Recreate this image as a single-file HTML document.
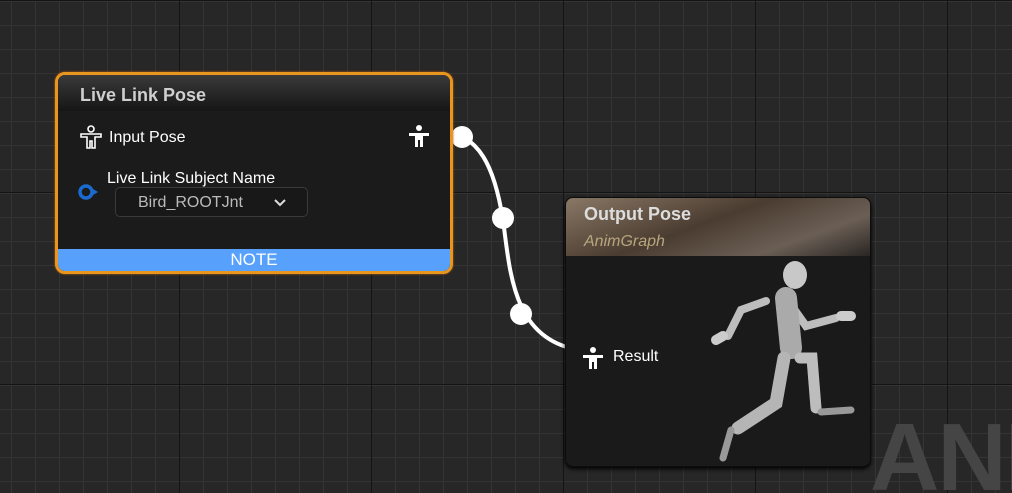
<!DOCTYPE html>
<html style="width:1012px;height:493px;overflow:hidden"><head><style>
body{margin:0;width:1012px;height:493px;overflow:hidden;font-family:"Liberation Sans",sans-serif;
background-color:#272727;
background-image:
linear-gradient(90deg,#141414 1px,transparent 1px),
linear-gradient(0deg,#141414 1px,transparent 1px),
linear-gradient(90deg,#343434 1px,transparent 1px),
linear-gradient(0deg,#343434 1px,transparent 1px);
background-size:192px 192px,192px 192px,24px 24px,24px 24px;
background-position:179px 0,0 193px,11px 0,0 2px;position:relative}
.n1{position:absolute;left:55px;top:72px;width:392px;height:196px;border:3px solid #e8961e;border-radius:10px;background:#1b1b1b;overflow:hidden;box-shadow:0 0 2px #c06010}
.h1{height:36px;background:linear-gradient(#3a3a3a,#161616);color:#cfcfcf;font-weight:bold;font-size:18px;line-height:40px;padding-left:22px}
.t{position:absolute;color:#fff;font-size:16px}
.note{position:absolute;left:0;right:0;bottom:0;height:22px;background:#57a0fb;color:#fff;text-align:center;font-size:17px;line-height:22px}
.dd{position:absolute;left:57px;top:112px;width:193px;height:30px;border:1px solid #3a3a3a;border-radius:5px;background:#181818;color:#bbb;font-size:16px;line-height:30px;padding-left:22px;box-sizing:border-box}
.n2{position:absolute;left:565px;top:197px;width:304px;height:268px;border-radius:8px;background:#1a1a1a;border:1px solid #0c0c0c;overflow:hidden;box-shadow:0 2px 4px #000}
.h2{height:58px;background:linear-gradient(160deg,#8a7866 0%,#4a3c30 45%,#6b5f55 75%,#2a2624 100%)}
</style></head><body>
<div style="position:absolute;left:870px;top:410px;width:142px;height:83px;overflow:hidden"><div style="font-size:96px;line-height:96px;font-weight:bold;color:#454545;letter-spacing:-2px;white-space:nowrap">ANIM</div></div>
<svg style="position:absolute;left:0;top:0" width="1012" height="493">
<path d="M437 132 C480 130 495 170 503 220 C510 270 512 340 580 350" stroke="#fff" stroke-width="4" fill="none"/>
<circle cx="462" cy="137" r="11" fill="#fff"/><circle cx="503" cy="218" r="11" fill="#fff"/><circle cx="521" cy="314" r="11" fill="#fff"/>
</svg>
<div class="n1"><div class="h1">Live Link Pose</div>
<svg style="position:absolute;left:22px;top:50px" width="22" height="24" fill="none" stroke="#fff" stroke-width="1.6"><circle cx="11" cy="4" r="3"/><path d="M1 9h20v3h-6v11h-3v-7h-2v7H7V12H1z"/></svg>
<div class="t" style="left:51px;top:54px">Input Pose</div>
<svg style="position:absolute;left:350px;top:49px" width="22" height="24" fill="#fff"><circle cx="11" cy="4" r="3"/><path d="M1 9h20v3h-6v11h-3v-7h-2v7H7V12H1z"/></svg>
<div class="t" style="left:49px;top:95px">Live Link Subject Name</div>
<svg style="position:absolute;left:20px;top:109px" width="24" height="16"><circle cx="8" cy="8" r="6" stroke="#1a6ad0" stroke-width="3.5" fill="none"/><path d="M15 5l5 3-5 3z" fill="#1a6ad0"/></svg>
<div class="dd">Bird_ROOTJnt<svg style="position:absolute;left:157px;top:10px" width="14" height="10" fill="none" stroke="#ddd" stroke-width="2"><path d="M2 2l5 5 5-5"/></svg></div>
<div class="note">NOTE</div></div>
<div class="n2"><div class="h2">
<div style="color:#ddd;font-weight:bold;font-size:18px;position:absolute;left:18px;top:6px">Output Pose</div>
<div style="color:#b7a77e;font-style:italic;font-size:16px;position:absolute;left:18px;top:35px">AnimGraph</div></div>
<svg style="position:absolute;left:16px;top:148px" width="22" height="24" fill="#fff"><circle cx="11" cy="4" r="3"/><path d="M1 9h20v3h-6v11h-3v-7h-2v7H7V12H1z"/></svg>
<div class="t" style="left:47px;top:150px">Result</div>
<svg style="position:absolute;left:0;top:0" width="304" height="268" stroke-linecap="round">
<g stroke="#bdbdbd" fill="none">
<ellipse cx="229" cy="77" rx="12" ry="14" fill="#c8c8c8" stroke="none"/>
<path d="M200 103 L175 112 L162 138" stroke-width="8"/>
<path d="M225 107 L240 128 L270 120" stroke-width="8"/>
<path d="M220 100 L225 150" stroke-width="22" stroke="#aaa"/>
<path d="M218 160 L210 205 L172 230" stroke-width="13" stroke="#b5b5b5"/>
<path d="M234 160 L246 160 L250 210" stroke-width="11"/>
<path d="M255 214 L285 212" stroke-width="7" stroke="#999"/>
<path d="M165 232 L157 260" stroke-width="7" stroke="#999"/>
<path d="M157 138 L150 142" stroke-width="10" stroke="#ccc"/>
<path d="M275 118 L285 118" stroke-width="10" stroke="#ccc"/>
</g></svg></div>
</body></html>
